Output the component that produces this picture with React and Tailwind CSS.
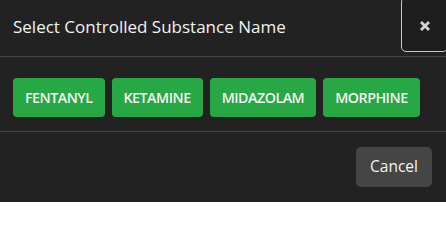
import React from 'react';

const substances = ['FENTANYL', 'KETAMINE', 'MIDAZOLAM', 'MORPHINE'];

const App = () => {
  return (
    <div className="w-[446px] h-[202px] overflow-hidden bg-[#222222] text-white font-['Open_Sans',sans-serif]">
      {/* header */}
      <div className="flex items-start justify-between h-[57px] border-b border-[#454545]">
        <h5 className="pl-[13px] pt-[14px] text-[17px] leading-[26px] text-[#f2f2f2]">Select Controlled Substance Name</h5>
        <button className="-mt-[3px] -mr-[2px] w-[47px] h-[55px] flex items-center justify-center rounded-[5px] border border-[#c8c8c8] bg-[#1e1e1e] text-[#d4d4d4]">
          <svg width="12" height="12" viewBox="0 0 12 12" className="mt-[3px]">
            <path d="M2 2 L10 10 M10 2 L2 10" stroke="currentColor" strokeWidth="2.8" strokeLinecap="butt" />
          </svg>
        </button>
      </div>

      {/* body */}
      <div className="flex gap-[7px] pl-[13px] pt-[21px] pb-[14px] border-b border-[#454545]">
        {substances.map((name) => (
          <button key={name} className="h-[39px] px-3 rounded-[4px] bg-[#28a745] text-[14.25px] font-semibold text-[#f4f4f4] tracking-[-0.5px]">
            {name}
          </button>
        ))}
      </div>

      {/* footer */}
      <div className="flex justify-end pt-[15px] pr-[14px]">
        <button className="w-[76px] h-[40px] rounded-[5px] bg-[#454545] text-[15.5px] text-[#f4f4f4]">Cancel</button>
      </div>
    </div>
  );
};

export default App;
